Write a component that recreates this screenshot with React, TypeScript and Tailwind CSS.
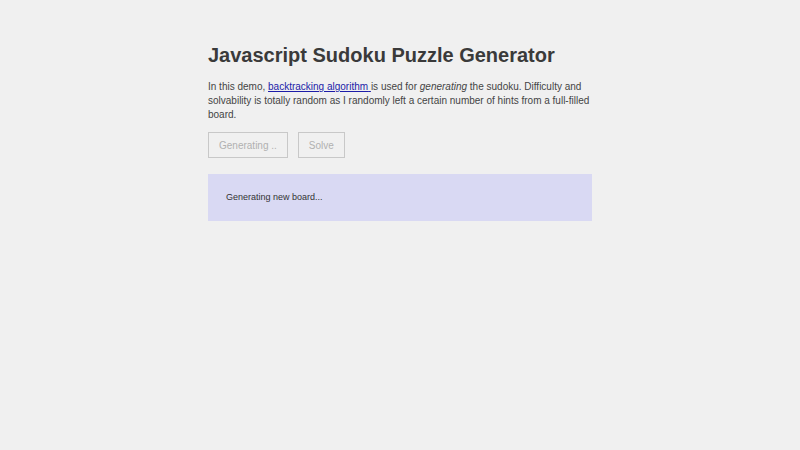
export default function App() {
  return (
    <div className="min-h-[450px] w-full bg-[#f0f0f0] font-['Liberation_Sans',Arial,sans-serif] text-[#444]">
      <div className="mx-auto w-[384px] pt-[41px]">
        <h1 className="text-[20px] font-bold leading-[28px] text-[#3a3a3a]">
          Javascript Sudoku Puzzle Generator
        </h1>
        <p className="mt-[11px] text-[10px] leading-[14px] text-[#444]">
          In this demo,{" "}
          <a href="#" className="text-[#1c1ca8] underline">
            backtracking algorithm{" "}
          </a>
          is used for <em>generating</em> the sudoku. Difficulty and solvability is totally random as I
          randomly left a certain number of hints from a full-filled board.
        </p>
        <div className="mt-[10px] flex gap-[10px]">
          <button
            disabled
            className="h-[26px] border border-[#c8c8c8] bg-[#f0f0f0] px-[10px] text-[10px] text-[#b0b0b0]"
          >
            Generating ..
          </button>
          <button
            disabled
            className="h-[26px] border border-[#c8c8c8] bg-[#f0f0f0] px-[10px] text-[10px] text-[#b0b0b0]"
          >
            Solve
          </button>
        </div>
        <div className="mt-[16px] h-[47px] bg-[#d9d9f3] px-[18px] pt-[17px] text-[9px] leading-[12px] text-[#333]">
          Generating new board...
        </div>
      </div>
    </div>
  );
}
